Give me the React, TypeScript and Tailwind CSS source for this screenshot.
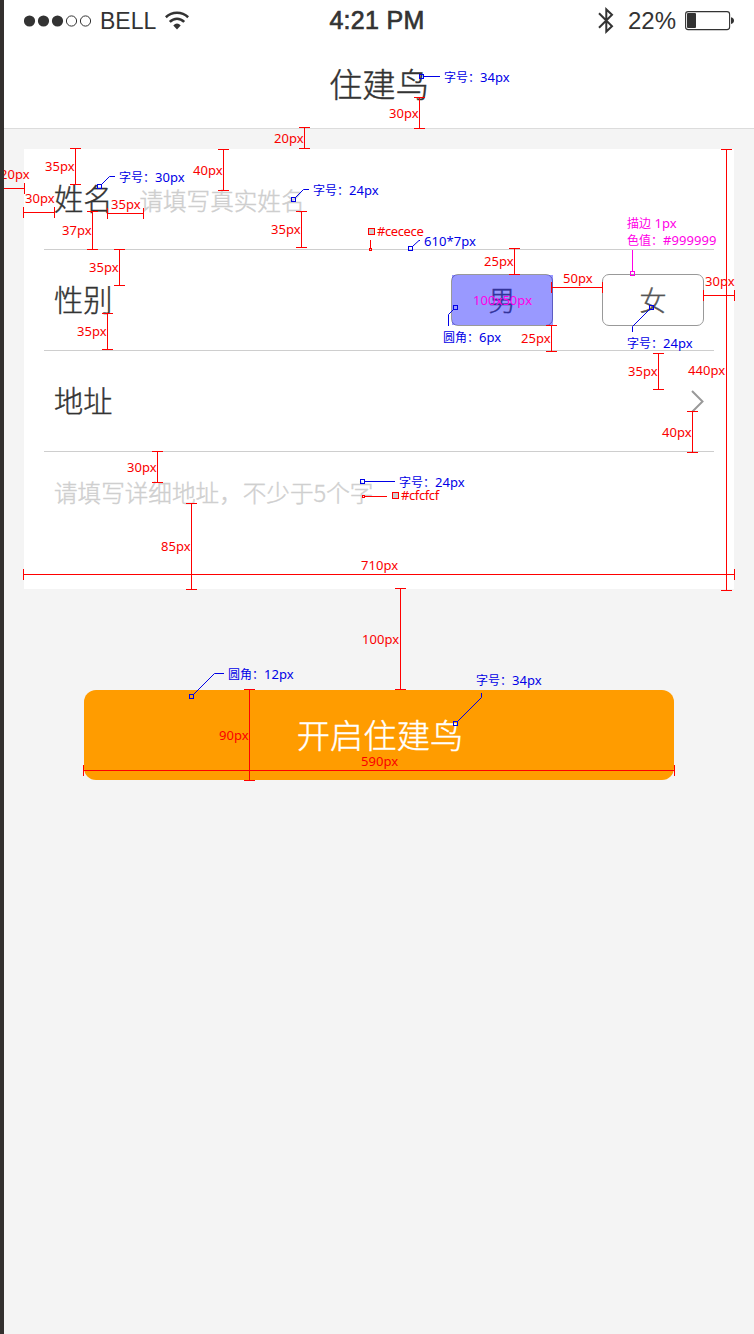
import React from "react";

const RED = "#fa0000";
const BLUE = "#0000e6";
const PINK = "#ff00e6";

// Vertical dimension lines: x, top, bottom
const vertical: [number, number, number][] = [
  [419, 97, 128],
  [304, 127, 148],
  [75, 148, 184],
  [223, 149, 190],
  [92, 211, 249],
  [301, 211, 247],
  [119, 249, 285],
  [107, 313, 349],
  [514, 248, 274],
  [551, 325, 351],
  [726, 149, 590],
  [658, 353, 389],
  [692, 411, 452],
  [157, 451, 482],
  [191, 503, 589],
  [400, 588, 689],
  [249, 689, 780],
];

// Horizontal dimension lines: y, left, right
const horizontal: [number, number, number][] = [
  [188, 3, 24],
  [212, 23, 54],
  [213, 107, 143],
  [287, 551, 602],
  [295, 703, 734],
  [574, 23, 734],
  [770, 83, 674],
];

// Callouts: handle centre, then the leader's points
const leaders: { at: [number, number]; points: string; color: string }[] = [
  { at: [421, 76], points: "424,76.5 440,76.5", color: BLUE },
  { at: [99, 186], points: "102,184 109.5,176.5 115,176.5", color: BLUE },
  { at: [293, 199], points: "296,197 303.5,189.5 309,189.5", color: BLUE },
  { at: [410, 248], points: "413,246 419,240.5 420,240.5", color: BLUE },
  { at: [455, 307], points: "453,310 448.5,314.5 448.5,326", color: BLUE },
  { at: [651, 307], points: "649,310 632.5,326.5 632.5,332", color: BLUE },
  { at: [632, 273], points: "632.5,250 632.5,271", color: PINK },
  { at: [362, 481], points: "365,481.5 395,481.5", color: BLUE },
  { at: [191, 696], points: "194,694 214.5,673.5 224,673.5", color: BLUE },
  { at: [455, 723], points: "458,721 481.5,697.5 481.5,693", color: BLUE },
];

type Note = { x: number; y: number; cjk?: string; text: string; tone?: "blue" | "pink"; tight?: boolean };

// Label position: left edge and the middle of the digits
const notes: Note[] = [
  { x: 389, y: 114, text: "30px" },
  { x: 274, y: 139, text: "20px" },
  { x: 45, y: 167, text: "35px" },
  { x: 193, y: 171, text: "40px" },
  { x: 0, y: 175, text: "20px" },
  { x: 25, y: 199, text: "30px" },
  { x: 111, y: 205, text: "35px" },
  { x: 62, y: 231, text: "37px" },
  { x: 271, y: 230, text: "35px" },
  { x: 377, y: 232, text: "#cecece", tight: true },
  { x: 89, y: 268, text: "35px" },
  { x: 77, y: 332, text: "35px" },
  { x: 484, y: 262, text: "25px" },
  { x: 521, y: 339, text: "25px" },
  { x: 563, y: 279, text: "50px" },
  { x: 705, y: 282, text: "30px" },
  { x: 628, y: 372, text: "35px" },
  { x: 688, y: 371, text: "440px" },
  { x: 662, y: 433, text: "40px" },
  { x: 127, y: 468, text: "30px" },
  { x: 161, y: 547, text: "85px" },
  { x: 361, y: 566, text: "710px" },
  { x: 362, y: 640, text: "100px" },
  { x: 219, y: 736, text: "90px" },
  { x: 361, y: 762, text: "590px" },
  { x: 401, y: 496, text: "#cfcfcf", tight: true },
  { x: 444, y: 78, cjk: "字号：", text: "34px", tone: "blue" },
  { x: 119, y: 178, cjk: "字号：", text: "30px", tone: "blue" },
  { x: 313, y: 191, cjk: "字号：", text: "24px", tone: "blue" },
  { x: 424, y: 242, text: "610*7px", tone: "blue" },
  { x: 443, y: 338, cjk: "圆角：", text: "6px", tone: "blue" },
  { x: 627, y: 344, cjk: "字号：", text: "24px", tone: "blue" },
  { x: 399, y: 483, cjk: "字号：", text: "24px", tone: "blue" },
  { x: 228, y: 675, cjk: "圆角：", text: "12px", tone: "blue" },
  { x: 476, y: 681, cjk: "字号：", text: "34px", tone: "blue" },
  { x: 627, y: 224, cjk: "描边", text: " 1px", tone: "pink" },
  { x: 627, y: 241, cjk: "色值：", text: "#999999", tone: "pink" },
  { x: 473, y: 301, text: "100x50px", tone: "pink" },
];

function Signal() {
  return (
    <svg width="68" height="12" viewBox="0 0 68 12" fill="#333">
      <circle cx="5.5" cy="6" r="5.6" />
      <circle cx="19.5" cy="6" r="5.6" />
      <circle cx="33.5" cy="6" r="5.6" />
      <circle cx="47.5" cy="6" r="5.1" fill="none" stroke="#333" />
      <circle cx="61.5" cy="6" r="5.1" fill="none" stroke="#333" />
    </svg>
  );
}

function Wifi() {
  return (
    <svg width="24" height="19" viewBox="0 0 24 19" fill="none" stroke="#333" strokeWidth="2.6">
      <path d="M.8 6.2Q5.5 1.7 12 1.7T23.2 6.2" />
      <path d="M4.8 10.9Q8 7.7 12 7.7T19.2 10.9" />
      <path d="M8.3 14.4Q10 12.4 12 12.4T15.7 14.4L12 18.6Z" fill="#333" stroke="none" />
    </svg>
  );
}

function Bluetooth() {
  return (
    <svg width="16" height="27" viewBox="0 0 16 27" fill="none" stroke="#333" strokeWidth="2">
      <path d="M1 6.3 14 19.2 8.3 24.6V2.4L14 7.8 1 20.7" />
    </svg>
  );
}

function Battery() {
  return (
    <svg width="50" height="20" viewBox="0 0 50 20">
      <rect x=".6" y=".6" width="44" height="18" rx="2.6" fill="none" stroke="#333" strokeWidth="1.1" />
      <rect x="2" y="2" width="9" height="15" rx="1" fill="#333" />
      <path d="M46 6.2Q49 7 49 9.6T46 13Z" fill="#333" />
    </svg>
  );
}

function Handle({ x, y, color }: { x: number; y: number; color: string }) {
  return <rect x={x - 1.5} y={y - 1.5} width="4" height="4" fill="none" stroke={color} />;
}

function Annotations() {
  return (
    <div className="pointer-events-none absolute inset-0 overflow-hidden font-normal">
      <svg className="absolute inset-0" width="754" height="1334">
        <rect x="452" y="275" width="101" height="50" fill="#0000ff" fillOpacity=".4" />
        <g stroke="#ff0000" fill="none" shapeRendering="crispEdges">
          {vertical.map(([x, a, b]) => (
            <path key={`${x}-${a}`} d={`M${x + 0.5} ${a}V${b + 1}M${x - 5} ${a + 0.5}H${x + 6}M${x - 5} ${b + 0.5}H${x + 6}`} />
          ))}
          {horizontal.map(([y, a, b]) => (
            <path key={`${y}-${a}`} d={`M${a} ${y + 0.5}H${b + 1}M${a + 0.5} ${y - 5}V${y + 6}M${b + 0.5} ${y - 5}V${y + 6}`} />
          ))}
          <path d="M370.5 240V248M365 496.5H387" />
          <rect x="369.5" y="248.5" width="2" height="2" />
          <rect x="362.5" y="495.5" width="2" height="2" />
          <rect x="368.5" y="228.5" width="6" height="6" fill="#cecece" />
          <rect x="392.5" y="492.5" width="6" height="6" fill="#cfcfcf" />
        </g>
        {leaders.map(({ at, points, color }) => (
          <g key={points}>
            <polyline points={points} fill="none" stroke={color} />
            <Handle x={at[0]} y={at[1]} color={color} />
          </g>
        ))}
      </svg>
      {notes.map(({ x, y, cjk, text, tone, tight }) => (
        <span
          key={`${x}-${y}`}
          className={`absolute whitespace-pre font-['Noto_Sans','Noto_Sans_CJK_SC',sans-serif] text-[13px] leading-[14px] ${tight ? "tracking-[-0.4px]" : "tracking-[0.05px]"}`}
          style={{ left: x, top: y - 8, color: tone === "blue" ? BLUE : tone === "pink" ? PINK : RED }}
        >
          {cjk && <span className="font-['Noto_Sans_CJK_SC',sans-serif] text-[12px] tracking-normal">{cjk}</span>}
          {text}
        </span>
      ))}
    </div>
  );
}

function Row({ label, children }: { label: string; children?: React.ReactNode }) {
  return (
    <div className="flex h-[101px] items-center border-b border-[#cecece] px-[10px]">
      <span className="pb-[2px] text-[29.2px] leading-none text-[#333]">{label}</span>
      {children}
    </div>
  );
}

export default function App() {
  return (
    <div className="relative h-[1334px] w-[754px] overflow-hidden border-l-4 border-[#33302e] bg-[#f4f4f4] font-['Noto_Sans_CJK_SC',sans-serif] font-light">
      <header className="flex h-[129px] flex-col border-b border-[#dcdcdc] bg-white">
        <div className="flex h-[41px] items-center justify-between pr-[19px] pl-[20px] font-['Liberation_Sans',sans-serif] text-[#333]">
          <div className="flex w-[190px] items-center">
            <Signal />
            <span className="ml-[8px] pt-[1px] text-[23px] font-normal">BELL</span>
            <span className="ml-[9px]"><Wifi /></span>
          </div>
          <div className="text-center text-[25px] font-normal tracking-[0.3px] [-webkit-text-stroke:0.7px_#333]">4:21 PM</div>
          <div className="flex w-[195px] items-center justify-end">
            <Bluetooth />
            <span className="mr-[9px] ml-[14px] pt-[1px] text-[24px] font-normal">22%</span>
            <Battery />
          </div>
        </div>
        <h1 className="flex h-[87px] items-center justify-center pb-[4px] text-[33.3px] leading-none text-[#333] [-webkit-text-stroke:0.4px_currentColor]">住建鸟</h1>
      </header>

      <main className="flex flex-col items-center [-webkit-text-stroke:0.4px_currentColor]">
        <section className="mt-[20px] h-[440px] w-[710px] bg-white px-[20px]">
          <Row label="姓名">
            <span className="ml-[27px] pt-[4px] text-[23.6px] leading-none text-[#cecece]">请填写真实姓名</span>
          </Row>
          <Row label="性别">
            <div className="ml-auto flex gap-[49px] text-[27px] leading-none text-[#555]">
              <button className="h-[52px] w-[102px] rounded-[7px] border border-[#999] bg-white pb-[2px]">男</button>
              <button className="h-[52px] w-[102px] rounded-[7px] border border-[#999] bg-white pb-[2px]">女</button>
            </div>
          </Row>
          <Row label="地址">
            <svg className="ml-auto" width="13" height="23" viewBox="0 0 13 23" fill="none" stroke="#999" strokeWidth="2">
              <path d="M1 1 11.5 11.5 1 22" />
            </svg>
          </Row>
          <p className="px-[10px] pt-[29px] text-[23.6px] leading-none text-[#cfcfcf]">请填写详细地址，不少于5个字</p>
        </section>
        <button className="mt-[101px] h-[90px] w-[590px] rounded-[12px] bg-[#ff9c00] pb-[3px] pl-[2px] text-[33.3px] leading-none text-white">
          开启住建鸟
        </button>
      </main>
      <div className="absolute inset-y-0 -left-1 w-[754px] [-webkit-text-stroke:0]">
        <Annotations />
      </div>
    </div>
  );
}
